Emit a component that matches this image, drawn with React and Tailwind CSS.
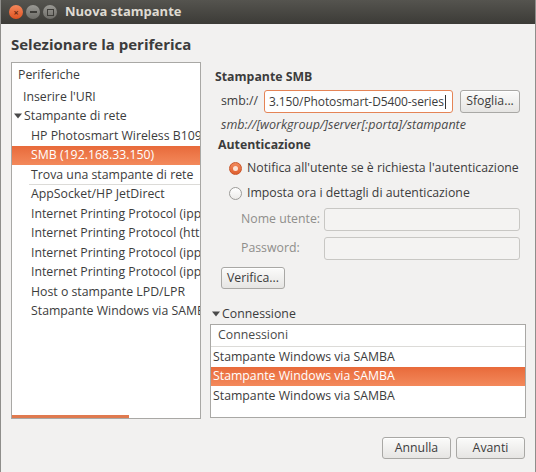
import React from "react";

const font = { fontFamily: '"Open Sans", "Noto Sans", sans-serif' };

function Btn({ children, className = "" }) {
  return (
    <div
      className={
        "flex items-center justify-center rounded-[3px] border border-[#a9a8a5] bg-gradient-to-b from-[#fbfbfa] to-[#e6e5e3] text-[12.3px] text-[#3c3c3c] shadow-[inset_0_1px_0_#ffffff] " +
        className
      }
    >
      {children}
    </div>
  );
}

function Row({ children, indent = "pl-[19px]", selected = false }) {
  return (
    <div
      className={
        "flex h-[19.5px] items-center whitespace-nowrap overflow-hidden text-[12.3px] " +
        indent +
        (selected
          ? " bg-gradient-to-b from-[#e86a3a] to-[#f3895b] text-white"
          : " text-[#3c3c3c]")
      }
    >
      {children}
    </div>
  );
}

function Radio({ checked }) {
  return checked ? (
    <div className="flex h-[13px] w-[13px] items-center justify-center rounded-full border border-[#c9562a] bg-gradient-to-b from-[#f28a5c] to-[#df5f2e]">
      <div className="h-[5px] w-[5px] rounded-full bg-[#fbe3d6]" />
    </div>
  ) : (
    <div className="h-[13px] w-[13px] rounded-full border border-[#9c9b98] bg-gradient-to-b from-white to-[#ecebe9]" />
  );
}

function Tri() {
  return (
    <svg width="8" height="8" viewBox="0 0 8 8" className="mr-[2px]">
      <path d="M0 1.5 L8 1.5 L4 6.5 Z" fill="#4a4a4a" />
    </svg>
  );
}

export default function App() {
  return (
    <div
      className="flex h-[472px] w-[536px] flex-col overflow-hidden border-x border-[#8f8e8b] bg-[#f2f1f0] text-[#3c3c3c]"
      style={font}
    >
      {/* title bar */}
      <div className="flex h-[24px] shrink-0 items-center bg-gradient-to-b from-[#55544f] to-[#3c3b37] pl-[8px]">
        <div className="flex items-center gap-[3px]">
          <div className="flex h-[14px] w-[14px] items-center justify-center rounded-full bg-gradient-to-b from-[#f4875a] to-[#df5320] text-[9px] font-bold leading-none text-[#6b2a10]">
            ×
          </div>
          <div className="flex h-[14px] w-[14px] items-center justify-center rounded-full bg-gradient-to-b from-[#9a9994] to-[#6e6d68]">
            <div className="h-[2px] w-[7px] bg-[#3e3d39]" />
          </div>
          <div className="flex h-[14px] w-[14px] items-center justify-center rounded-full bg-gradient-to-b from-[#9a9994] to-[#6e6d68]">
            <div className="h-[7px] w-[7px] border border-[#3e3d39]" />
          </div>
        </div>
        <div className="ml-[8px] text-[13px] font-bold text-[#dfdbd2]">Nuova stampante</div>
      </div>

      {/* heading */}
      <div className="pl-[10px] pt-[10px] text-[15px] font-bold leading-[20px] text-[#3c3c3c]">
        Selezionare la periferica
      </div>

      <div className="mt-[8px] flex">
        {/* left list */}
        <div className="relative ml-[10px] flex h-[357px] w-[190px] shrink-0 flex-col border border-[#a9a8a5] bg-white">
          <div className="flex h-[24px] items-center pl-[6px] text-[12.3px] text-[#3c3c3c]">Periferiche</div>
          <Row indent="pl-[11px]">Inserire l'URI</Row>
          <Row indent="pl-[2px]">
            <Tri />
            Stampante di rete
          </Row>
          <Row>HP Photosmart Wireless B109</Row>
          <Row selected>SMB (192.168.33.150)</Row>
          <Row>Trova una stampante di rete</Row>
          <div className="relative h-0">
            <div className="absolute left-[17px] right-0 top-[-1px] h-px bg-[#dcdbd8]" />
          </div>
          <Row>AppSocket/HP JetDirect</Row>
          <Row>Internet Printing Protocol (ipp</Row>
          <Row>Internet Printing Protocol (htt</Row>
          <Row>Internet Printing Protocol (ipp</Row>
          <Row>Internet Printing Protocol (ipp</Row>
          <Row>Host o stampante LPD/LPR</Row>
          <Row>Stampante Windows via SAMB</Row>
          <div className="absolute bottom-0 left-0 h-[3px] w-[117px] bg-[#e07a4f]" />
        </div>

        {/* right panel */}
        <div className="ml-[9px] flex w-[316px] flex-col pt-[6px]">
          <div className="pl-[5px] text-[12.3px] font-bold leading-[18px]">Stampante SMB</div>
          <div className="mt-[4px] flex items-center">
            <div className="ml-[11px] w-[43px] text-[12.3px]">smb://</div>
            <div className="flex h-[23px] w-[189px] items-center overflow-hidden rounded-[3px] border border-[#e58456] bg-white pl-[4px] text-[12px] tracking-[-0.1px] whitespace-nowrap">
              3.150/Photosmart-D5400-series
              <span className="ml-[1px] inline-block h-[14px] w-px bg-[#333]" />
            </div>
            <Btn className="ml-[7px] h-[23px] w-[60px]">Sfoglia...</Btn>
          </div>
          <div className="mt-[3px] pl-[11px] text-[12.5px] italic leading-[18px] text-[#4a4a4a]">
            smb://[workgroup/]server[:porta]/stampante
          </div>
          <div className="mt-[2px] pl-[8px] text-[12.3px] font-bold leading-[18px]">Autenticazione</div>
          <div className="mt-[3px] flex h-[22px] items-center pl-[19px] text-[12.3px]">
            <Radio checked />
            <span className="ml-[5px]">Notifica all'utente se è richiesta l'autenticazione</span>
          </div>
          <div className="mt-[3px] flex h-[22px] items-center pl-[19px] text-[12.3px]">
            <Radio />
            <span className="ml-[5px]">Imposta ora i dettagli di autenticazione</span>
          </div>
          <div className="mt-[4px] flex h-[23px] items-center">
            <div className="w-[114px] pl-[31px] text-[12.3px] text-[#8f8e8b]">Nome utente:</div>
            <div className="h-[23px] w-[196px] rounded-[3px] border border-[#c8c7c4] bg-[#f4f3f2]" />
          </div>
          <div className="mt-[6px] flex h-[23px] items-center">
            <div className="w-[114px] pl-[31px] text-[12.3px] text-[#8f8e8b]">Password:</div>
            <div className="h-[23px] w-[196px] rounded-[3px] border border-[#c8c7c4] bg-[#f4f3f2]" />
          </div>
          <Btn className="ml-[11px] mt-[7px] h-[22px] w-[64px]">Verifica...</Btn>
          <div className="mt-[17px] flex items-center pl-[2px] text-[12.3px] leading-[16px]">
            <Tri />
            Connessione
          </div>
          <div className="mt-[2px] flex h-[94px] flex-col border border-[#a9a8a5] bg-white">
            <div className="flex h-[22px] items-center border-b border-[#dcdbd8] pl-[7px] text-[12.3px] text-[#4a4a4a]">
              Connessioni
            </div>
            <Row indent="pl-[2px]">Stampante Windows via SAMBA</Row>
            <Row indent="pl-[2px]" selected>Stampante Windows via SAMBA</Row>
            <Row indent="pl-[2px]">Stampante Windows via SAMBA</Row>
          </div>
          <div className="mt-[19px] flex justify-end gap-[5px] pr-[1px]">
            <Btn className="h-[22px] w-[69px]">Annulla</Btn>
            <Btn className="h-[22px] w-[69px]">Avanti</Btn>
          </div>
        </div>
      </div>
    </div>
  );
}
